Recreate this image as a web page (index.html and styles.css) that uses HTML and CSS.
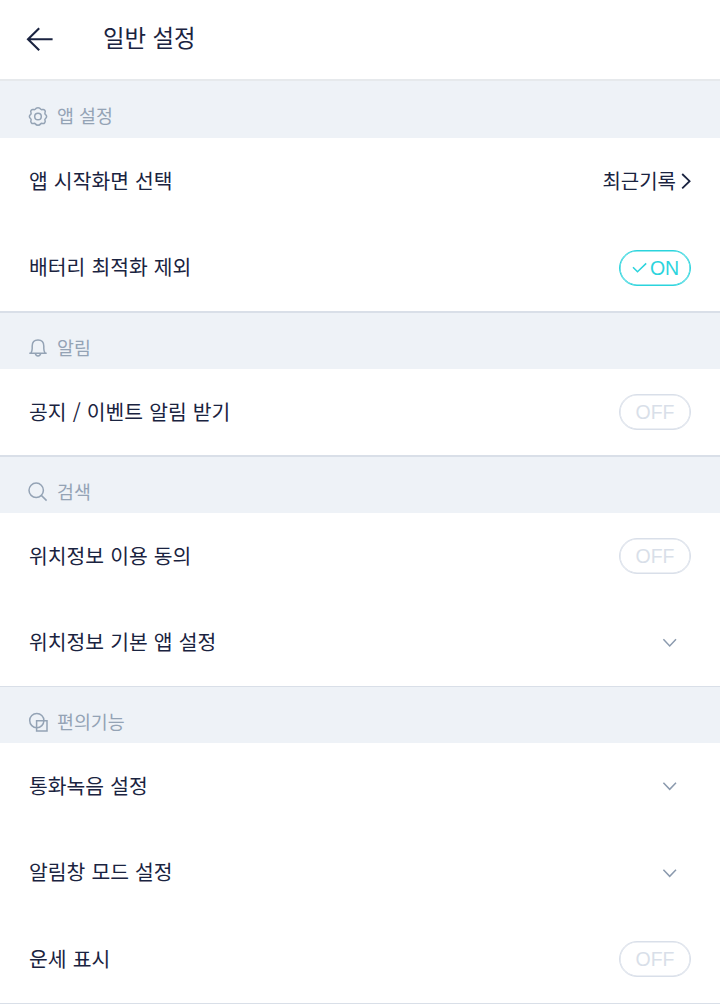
FILE: index.html
```html
<!DOCTYPE html>
<html lang="ko">
<head>
    <meta charset="utf-8">
    <title>일반 설정</title>
    <link rel="stylesheet" href="styles.css">
</head>
<body>

    <div class="header">
        <svg class="back" width="28" height="26" viewBox="0 0 28 26"><path d="M13.2 2.2L2 13.2L13.2 24.2M2 13.2H26.6"/></svg>
        <h1>일반 설정</h1>
    </div>

    <div class="section">
        <div class="section-title">
            <svg width="20" height="20" viewBox="0 0 20 20"><path d="M7.5 3.1Q8 1.7 10 1.7T12.5 3.1Q13.2 3.9 14.4 3.5Q16 3.1 16.8 4.3Q17.7 5.5 17 6.7Q16.5 7.8 17.5 8.6Q18.6 9.3 18.6 10.5T17.5 12.5Q16.5 13.3 17 14.4Q17.6 15.7 16.7 16.7Q15.8 17.9 14.4 17.5Q13.2 17.1 12.5 18Q11.8 19.2 10 19.2T7.5 18Q6.8 17.1 5.6 17.5Q4.2 17.9 3.3 16.7Q2.4 15.7 3 14.4Q3.5 13.3 2.5 12.5Q1.4 11.7 1.4 10.5T2.5 8.6Q3.5 7.8 3 6.7Q2.3 5.5 3.2 4.3Q4 3.1 5.6 3.5Q6.8 3.9 7.5 3.1Z"/><circle cx="10" cy="10.5" r="3.3"/></svg>
            <span>앱 설정</span>
        </div>
        <div class="row">
            <span class="label">앱 시작화면 선택</span>
            <span class="value"><span>최근기록</span> <svg width="12" height="18" viewBox="0 0 12 18"><path d="M3.2 2L10.6 9.2L3.2 16.4"/></svg></span>
        </div>
        <div class="row">
            <span class="label">배터리 최적화 제외</span>
            <span class="toggle on"><svg width="16" height="12" viewBox="0 0 16 12"><path d="M2 5.2L6.5 9.8L15.2 1.4"/></svg>ON</span>
        </div>
    </div>

    <div class="section">
        <div class="section-title">
            <svg width="20" height="20" viewBox="0 0 20 20"><path d="M1.3 15.3H18.7M2.8 15.3Q4.2 13.4 4.2 10.5V8C4.2 4.2 6.5 1.9 10 1.9S15.8 4.2 15.8 8V10.5Q15.8 13.4 17.2 15.3M7.3 15.5Q8 18 10 18T12.7 15.5"/></svg>
            <span>알림</span>
        </div>
        <div class="row single">
            <span class="label">공지 / 이벤트 알림 받기</span>
            <span class="toggle">OFF</span>
        </div>
    </div>

    <div class="section">
        <div class="section-title">
            <svg width="20" height="20" viewBox="0 0 20 20"><circle cx="8.2" cy="8.3" r="7.2"/><path d="M13.3 13.4L18.6 18.6"/></svg>
            <span>검색</span>
        </div>
        <div class="row">
            <span class="label">위치정보 이용 동의</span>
            <span class="toggle">OFF</span>
        </div>
        <div class="row">
            <span class="label">위치정보 기본 앱 설정</span>
            <svg class="down" width="16" height="12" viewBox="0 0 16 12"><path d="M1.4 2.3L7.7 8.9L14 2.3"/></svg>
        </div>
    </div>

    <div class="section thin">
        <div class="section-title">
            <svg width="20" height="20" viewBox="0 0 20 20"><circle cx="8.8" cy="8.6" r="7.1"/><path d="M8.6 8.7H19V19H8.6Z"/></svg>
            <span>편의기능</span>
        </div>
        <div class="row">
            <span class="label">통화녹음 설정</span>
            <svg class="down" width="16" height="12" viewBox="0 0 16 12"><path d="M1.4 2.7L7.7 9.3L14 2.7"/></svg>
        </div>
        <div class="row">
            <span class="label">알림창 모드 설정</span>
            <svg class="down" width="16" height="12" viewBox="0 0 16 12"><path d="M1.4 2.7L7.7 9.3L14 2.7"/></svg>
        </div>
        <div class="row">
            <span class="label">운세 표시</span>
            <span class="toggle">OFF</span>
        </div>
    </div>
    <div class="line"></div>

</body>
</html>
```

FILE: styles.css
```css
* {
    box-sizing: border-box;
}

body {
    margin: 0;
    height: 1004px;
    overflow: hidden;
    background: #fff;
    color: #1a2340;
    font-family: "Noto Sans CJK KR", sans-serif;
}

svg {
    display: block;
    flex: none;
    fill: none;
    stroke: currentColor;
    stroke-width: 1.5;
}

.header {
    display: flex;
    align-items: center;
    height: 79px;
    padding: 0 26px 3px;
}

.header .back {
    margin-top: 2px;
    stroke-width: 2.1;
}

.header h1 {
    margin: 0 0 2px 49px;
    font-size: 23.4px;
    font-weight: 400;
    line-height: 36px;
}

.section-title {
    display: flex;
    align-items: center;
    gap: 9px;
    height: 58px;
    padding: 13px 28px 0;
    border-top: 2px solid #d9dfe8;
    background: #eef2f7;
    color: #94a3b5;
    font-size: 18.4px;
    line-height: 28px;
}

.section-title span {
    padding-bottom: 2px;
}

.header + .section .section-title {
    height: 59px;
    border-color: #e6e9ec;
}

.thin .section-title {
    height: 57px;
    border-top-width: 1px;
}

.row {
    display: flex;
    align-items: center;
    justify-content: space-between;
    height: 86.5px;
    padding: 0 29px;
    font-size: 20.4px;
    line-height: 30px;
}

.single {
    height: 86px;
}

.label {
    padding-bottom: 3px;
    word-spacing: 0.4px;
}

.value {
    display: flex;
    align-items: center;
    gap: 3px;
    font-size: 20px;
}

.value svg {
    stroke-width: 1.8;
}

.toggle {
    display: flex;
    align-items: center;
    justify-content: center;
    gap: 3px;
    width: 72px;
    height: 36px;
    border: 1px solid #d9dfe9;
    border-radius: 18px;
    box-shadow: inset 0 0 0 0.6px #d9dfe9;
    color: #d9dfe9;
    font-family: "Liberation Sans", sans-serif;
    font-size: 19.5px;
}

.toggle.on {
    border-color: #2bd4dd;
    box-shadow: inset 0 0 0 0.6px #2bd4dd;
    color: #2bd4dd;
}

.down {
    margin-right: 13px;
    color: #8b9aae;
}

.line {
    height: 1px;
    background: #d9dfe8;
}
```
